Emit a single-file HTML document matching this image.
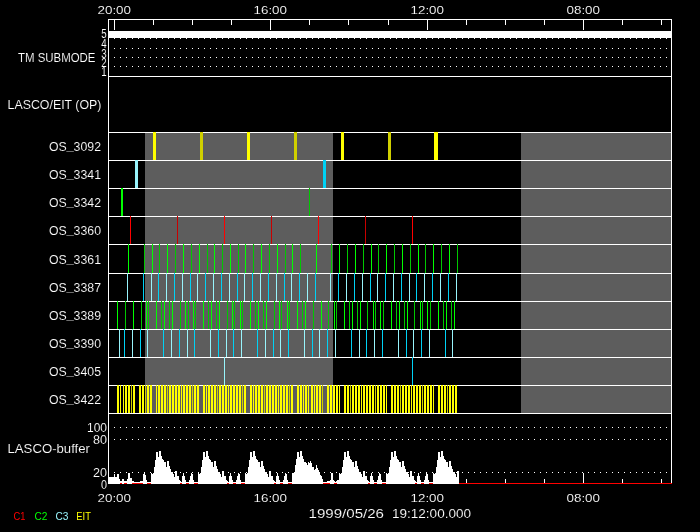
<!DOCTYPE html>
<html><head><meta charset="utf-8"><title>LASCO/EIT schedule</title>
<style>
html,body{margin:0;padding:0;background:#000;}
svg{display:block;will-change:transform}
text{font-family:"Liberation Sans",sans-serif;stroke:#000;stroke-width:0.12px;}
</style></head>
<body>
<svg width="700" height="532" viewBox="0 0 700 532">
<rect x="0" y="0" width="700" height="532" fill="#000"/>
<g shape-rendering="crispEdges">
<rect x="145" y="132" width="188" height="281" fill="#5d5d5d"/>
<rect x="521" y="132" width="150" height="281" fill="#5d5d5d"/>
<rect x="108" y="19" width="1" height="465" fill="#fff"/>
<rect x="671" y="19" width="1" height="465" fill="#fff"/>
<rect x="108" y="19" width="564" height="1" fill="#fff"/>
<rect x="108" y="76" width="564" height="1" fill="#fff"/>
<rect x="108" y="132" width="564" height="1" fill="#fff"/>
<rect x="108" y="160" width="564" height="1" fill="#fff"/>
<rect x="108" y="188" width="564" height="1" fill="#fff"/>
<rect x="108" y="216" width="564" height="1" fill="#fff"/>
<rect x="108" y="244" width="564" height="1" fill="#fff"/>
<rect x="108" y="273" width="564" height="1" fill="#fff"/>
<rect x="108" y="301" width="564" height="1" fill="#fff"/>
<rect x="108" y="329" width="564" height="1" fill="#fff"/>
<rect x="108" y="357" width="564" height="1" fill="#fff"/>
<rect x="108" y="385" width="564" height="1" fill="#fff"/>
<rect x="108" y="413" width="564" height="1" fill="#fff"/>
<rect x="114" y="19" width="1" height="11" fill="#fff"/>
<rect x="153" y="19" width="1" height="6" fill="#fff"/>
<rect x="192" y="19" width="1" height="6" fill="#fff"/>
<rect x="231" y="19" width="1" height="6" fill="#fff"/>
<rect x="270" y="19" width="1" height="11" fill="#fff"/>
<rect x="309" y="19" width="1" height="6" fill="#fff"/>
<rect x="348" y="19" width="1" height="6" fill="#fff"/>
<rect x="388" y="19" width="1" height="6" fill="#fff"/>
<rect x="427" y="19" width="1" height="11" fill="#fff"/>
<rect x="466" y="19" width="1" height="6" fill="#fff"/>
<rect x="505" y="19" width="1" height="6" fill="#fff"/>
<rect x="544" y="19" width="1" height="6" fill="#fff"/>
<rect x="583" y="19" width="1" height="11" fill="#fff"/>
<rect x="622" y="19" width="1" height="6" fill="#fff"/>
<rect x="661" y="19" width="1" height="6" fill="#fff"/>
<rect x="109" y="31" width="562" height="7" fill="#fff"/>
<path d="M114 38h1v1h-1zM120 38h1v1h-1zM126 38h1v1h-1zM132 38h1v1h-1zM138 38h1v1h-1zM144 38h1v1h-1zM150 38h1v1h-1zM156 38h1v1h-1zM162 38h1v1h-1zM168 38h1v1h-1zM174 38h1v1h-1zM180 38h1v1h-1zM186 38h1v1h-1zM192 38h1v1h-1zM198 38h1v1h-1zM204 38h1v1h-1zM210 38h1v1h-1zM216 38h1v1h-1zM222 38h1v1h-1zM228 38h1v1h-1zM234 38h1v1h-1zM240 38h1v1h-1zM246 38h1v1h-1zM252 38h1v1h-1zM258 38h1v1h-1zM264 38h1v1h-1zM270 38h1v1h-1zM276 38h1v1h-1zM282 38h1v1h-1zM288 38h1v1h-1zM294 38h1v1h-1zM300 38h1v1h-1zM306 38h1v1h-1zM312 38h1v1h-1zM318 38h1v1h-1zM324 38h1v1h-1zM330 38h1v1h-1zM336 38h1v1h-1zM342 38h1v1h-1zM348 38h1v1h-1zM354 38h1v1h-1zM360 38h1v1h-1zM366 38h1v1h-1zM372 38h1v1h-1zM378 38h1v1h-1zM384 38h1v1h-1zM390 38h1v1h-1zM396 38h1v1h-1zM402 38h1v1h-1zM408 38h1v1h-1zM414 38h1v1h-1zM420 38h1v1h-1zM426 38h1v1h-1zM432 38h1v1h-1zM438 38h1v1h-1zM444 38h1v1h-1zM450 38h1v1h-1zM456 38h1v1h-1zM462 38h1v1h-1zM468 38h1v1h-1zM474 38h1v1h-1zM480 38h1v1h-1zM486 38h1v1h-1zM492 38h1v1h-1zM498 38h1v1h-1zM504 38h1v1h-1zM510 38h1v1h-1zM516 38h1v1h-1zM522 38h1v1h-1zM528 38h1v1h-1zM534 38h1v1h-1zM540 38h1v1h-1zM546 38h1v1h-1zM552 38h1v1h-1zM558 38h1v1h-1zM564 38h1v1h-1zM570 38h1v1h-1zM576 38h1v1h-1zM582 38h1v1h-1zM588 38h1v1h-1zM594 38h1v1h-1zM600 38h1v1h-1zM606 38h1v1h-1zM612 38h1v1h-1zM618 38h1v1h-1zM624 38h1v1h-1zM630 38h1v1h-1zM636 38h1v1h-1zM642 38h1v1h-1zM648 38h1v1h-1zM654 38h1v1h-1zM660 38h1v1h-1zM666 38h1v1h-1zM114 48h1v1h-1zM120 48h1v1h-1zM126 48h1v1h-1zM132 48h1v1h-1zM138 48h1v1h-1zM144 48h1v1h-1zM150 48h1v1h-1zM156 48h1v1h-1zM162 48h1v1h-1zM168 48h1v1h-1zM174 48h1v1h-1zM180 48h1v1h-1zM186 48h1v1h-1zM192 48h1v1h-1zM198 48h1v1h-1zM204 48h1v1h-1zM210 48h1v1h-1zM216 48h1v1h-1zM222 48h1v1h-1zM228 48h1v1h-1zM234 48h1v1h-1zM240 48h1v1h-1zM246 48h1v1h-1zM252 48h1v1h-1zM258 48h1v1h-1zM264 48h1v1h-1zM270 48h1v1h-1zM276 48h1v1h-1zM282 48h1v1h-1zM288 48h1v1h-1zM294 48h1v1h-1zM300 48h1v1h-1zM306 48h1v1h-1zM312 48h1v1h-1zM318 48h1v1h-1zM324 48h1v1h-1zM330 48h1v1h-1zM336 48h1v1h-1zM342 48h1v1h-1zM348 48h1v1h-1zM354 48h1v1h-1zM360 48h1v1h-1zM366 48h1v1h-1zM372 48h1v1h-1zM378 48h1v1h-1zM384 48h1v1h-1zM390 48h1v1h-1zM396 48h1v1h-1zM402 48h1v1h-1zM408 48h1v1h-1zM414 48h1v1h-1zM420 48h1v1h-1zM426 48h1v1h-1zM432 48h1v1h-1zM438 48h1v1h-1zM444 48h1v1h-1zM450 48h1v1h-1zM456 48h1v1h-1zM462 48h1v1h-1zM468 48h1v1h-1zM474 48h1v1h-1zM480 48h1v1h-1zM486 48h1v1h-1zM492 48h1v1h-1zM498 48h1v1h-1zM504 48h1v1h-1zM510 48h1v1h-1zM516 48h1v1h-1zM522 48h1v1h-1zM528 48h1v1h-1zM534 48h1v1h-1zM540 48h1v1h-1zM546 48h1v1h-1zM552 48h1v1h-1zM558 48h1v1h-1zM564 48h1v1h-1zM570 48h1v1h-1zM576 48h1v1h-1zM582 48h1v1h-1zM588 48h1v1h-1zM594 48h1v1h-1zM600 48h1v1h-1zM606 48h1v1h-1zM612 48h1v1h-1zM618 48h1v1h-1zM624 48h1v1h-1zM630 48h1v1h-1zM636 48h1v1h-1zM642 48h1v1h-1zM648 48h1v1h-1zM654 48h1v1h-1zM660 48h1v1h-1zM666 48h1v1h-1zM114 57h1v1h-1zM120 57h1v1h-1zM126 57h1v1h-1zM132 57h1v1h-1zM138 57h1v1h-1zM144 57h1v1h-1zM150 57h1v1h-1zM156 57h1v1h-1zM162 57h1v1h-1zM168 57h1v1h-1zM174 57h1v1h-1zM180 57h1v1h-1zM186 57h1v1h-1zM192 57h1v1h-1zM198 57h1v1h-1zM204 57h1v1h-1zM210 57h1v1h-1zM216 57h1v1h-1zM222 57h1v1h-1zM228 57h1v1h-1zM234 57h1v1h-1zM240 57h1v1h-1zM246 57h1v1h-1zM252 57h1v1h-1zM258 57h1v1h-1zM264 57h1v1h-1zM270 57h1v1h-1zM276 57h1v1h-1zM282 57h1v1h-1zM288 57h1v1h-1zM294 57h1v1h-1zM300 57h1v1h-1zM306 57h1v1h-1zM312 57h1v1h-1zM318 57h1v1h-1zM324 57h1v1h-1zM330 57h1v1h-1zM336 57h1v1h-1zM342 57h1v1h-1zM348 57h1v1h-1zM354 57h1v1h-1zM360 57h1v1h-1zM366 57h1v1h-1zM372 57h1v1h-1zM378 57h1v1h-1zM384 57h1v1h-1zM390 57h1v1h-1zM396 57h1v1h-1zM402 57h1v1h-1zM408 57h1v1h-1zM414 57h1v1h-1zM420 57h1v1h-1zM426 57h1v1h-1zM432 57h1v1h-1zM438 57h1v1h-1zM444 57h1v1h-1zM450 57h1v1h-1zM456 57h1v1h-1zM462 57h1v1h-1zM468 57h1v1h-1zM474 57h1v1h-1zM480 57h1v1h-1zM486 57h1v1h-1zM492 57h1v1h-1zM498 57h1v1h-1zM504 57h1v1h-1zM510 57h1v1h-1zM516 57h1v1h-1zM522 57h1v1h-1zM528 57h1v1h-1zM534 57h1v1h-1zM540 57h1v1h-1zM546 57h1v1h-1zM552 57h1v1h-1zM558 57h1v1h-1zM564 57h1v1h-1zM570 57h1v1h-1zM576 57h1v1h-1zM582 57h1v1h-1zM588 57h1v1h-1zM594 57h1v1h-1zM600 57h1v1h-1zM606 57h1v1h-1zM612 57h1v1h-1zM618 57h1v1h-1zM624 57h1v1h-1zM630 57h1v1h-1zM636 57h1v1h-1zM642 57h1v1h-1zM648 57h1v1h-1zM654 57h1v1h-1zM660 57h1v1h-1zM666 57h1v1h-1zM114 66h1v1h-1zM120 66h1v1h-1zM126 66h1v1h-1zM132 66h1v1h-1zM138 66h1v1h-1zM144 66h1v1h-1zM150 66h1v1h-1zM156 66h1v1h-1zM162 66h1v1h-1zM168 66h1v1h-1zM174 66h1v1h-1zM180 66h1v1h-1zM186 66h1v1h-1zM192 66h1v1h-1zM198 66h1v1h-1zM204 66h1v1h-1zM210 66h1v1h-1zM216 66h1v1h-1zM222 66h1v1h-1zM228 66h1v1h-1zM234 66h1v1h-1zM240 66h1v1h-1zM246 66h1v1h-1zM252 66h1v1h-1zM258 66h1v1h-1zM264 66h1v1h-1zM270 66h1v1h-1zM276 66h1v1h-1zM282 66h1v1h-1zM288 66h1v1h-1zM294 66h1v1h-1zM300 66h1v1h-1zM306 66h1v1h-1zM312 66h1v1h-1zM318 66h1v1h-1zM324 66h1v1h-1zM330 66h1v1h-1zM336 66h1v1h-1zM342 66h1v1h-1zM348 66h1v1h-1zM354 66h1v1h-1zM360 66h1v1h-1zM366 66h1v1h-1zM372 66h1v1h-1zM378 66h1v1h-1zM384 66h1v1h-1zM390 66h1v1h-1zM396 66h1v1h-1zM402 66h1v1h-1zM408 66h1v1h-1zM414 66h1v1h-1zM420 66h1v1h-1zM426 66h1v1h-1zM432 66h1v1h-1zM438 66h1v1h-1zM444 66h1v1h-1zM450 66h1v1h-1zM456 66h1v1h-1zM462 66h1v1h-1zM468 66h1v1h-1zM474 66h1v1h-1zM480 66h1v1h-1zM486 66h1v1h-1zM492 66h1v1h-1zM498 66h1v1h-1zM504 66h1v1h-1zM510 66h1v1h-1zM516 66h1v1h-1zM522 66h1v1h-1zM528 66h1v1h-1zM534 66h1v1h-1zM540 66h1v1h-1zM546 66h1v1h-1zM552 66h1v1h-1zM558 66h1v1h-1zM564 66h1v1h-1zM570 66h1v1h-1zM576 66h1v1h-1zM582 66h1v1h-1zM588 66h1v1h-1zM594 66h1v1h-1zM600 66h1v1h-1zM606 66h1v1h-1zM612 66h1v1h-1zM618 66h1v1h-1zM624 66h1v1h-1zM630 66h1v1h-1zM636 66h1v1h-1zM642 66h1v1h-1zM648 66h1v1h-1zM654 66h1v1h-1zM660 66h1v1h-1zM666 66h1v1h-1zM114 427h1v1h-1zM120 427h1v1h-1zM126 427h1v1h-1zM132 427h1v1h-1zM138 427h1v1h-1zM144 427h1v1h-1zM150 427h1v1h-1zM156 427h1v1h-1zM162 427h1v1h-1zM168 427h1v1h-1zM174 427h1v1h-1zM180 427h1v1h-1zM186 427h1v1h-1zM192 427h1v1h-1zM198 427h1v1h-1zM204 427h1v1h-1zM210 427h1v1h-1zM216 427h1v1h-1zM222 427h1v1h-1zM228 427h1v1h-1zM234 427h1v1h-1zM240 427h1v1h-1zM246 427h1v1h-1zM252 427h1v1h-1zM258 427h1v1h-1zM264 427h1v1h-1zM270 427h1v1h-1zM276 427h1v1h-1zM282 427h1v1h-1zM288 427h1v1h-1zM294 427h1v1h-1zM300 427h1v1h-1zM306 427h1v1h-1zM312 427h1v1h-1zM318 427h1v1h-1zM324 427h1v1h-1zM330 427h1v1h-1zM336 427h1v1h-1zM342 427h1v1h-1zM348 427h1v1h-1zM354 427h1v1h-1zM360 427h1v1h-1zM366 427h1v1h-1zM372 427h1v1h-1zM378 427h1v1h-1zM384 427h1v1h-1zM390 427h1v1h-1zM396 427h1v1h-1zM402 427h1v1h-1zM408 427h1v1h-1zM414 427h1v1h-1zM420 427h1v1h-1zM426 427h1v1h-1zM432 427h1v1h-1zM438 427h1v1h-1zM444 427h1v1h-1zM450 427h1v1h-1zM456 427h1v1h-1zM462 427h1v1h-1zM468 427h1v1h-1zM474 427h1v1h-1zM480 427h1v1h-1zM486 427h1v1h-1zM492 427h1v1h-1zM498 427h1v1h-1zM504 427h1v1h-1zM510 427h1v1h-1zM516 427h1v1h-1zM522 427h1v1h-1zM528 427h1v1h-1zM534 427h1v1h-1zM540 427h1v1h-1zM546 427h1v1h-1zM552 427h1v1h-1zM558 427h1v1h-1zM564 427h1v1h-1zM570 427h1v1h-1zM576 427h1v1h-1zM582 427h1v1h-1zM588 427h1v1h-1zM594 427h1v1h-1zM600 427h1v1h-1zM606 427h1v1h-1zM612 427h1v1h-1zM618 427h1v1h-1zM624 427h1v1h-1zM630 427h1v1h-1zM636 427h1v1h-1zM642 427h1v1h-1zM648 427h1v1h-1zM654 427h1v1h-1zM660 427h1v1h-1zM666 427h1v1h-1zM114 439h1v1h-1zM120 439h1v1h-1zM126 439h1v1h-1zM132 439h1v1h-1zM138 439h1v1h-1zM144 439h1v1h-1zM150 439h1v1h-1zM156 439h1v1h-1zM162 439h1v1h-1zM168 439h1v1h-1zM174 439h1v1h-1zM180 439h1v1h-1zM186 439h1v1h-1zM192 439h1v1h-1zM198 439h1v1h-1zM204 439h1v1h-1zM210 439h1v1h-1zM216 439h1v1h-1zM222 439h1v1h-1zM228 439h1v1h-1zM234 439h1v1h-1zM240 439h1v1h-1zM246 439h1v1h-1zM252 439h1v1h-1zM258 439h1v1h-1zM264 439h1v1h-1zM270 439h1v1h-1zM276 439h1v1h-1zM282 439h1v1h-1zM288 439h1v1h-1zM294 439h1v1h-1zM300 439h1v1h-1zM306 439h1v1h-1zM312 439h1v1h-1zM318 439h1v1h-1zM324 439h1v1h-1zM330 439h1v1h-1zM336 439h1v1h-1zM342 439h1v1h-1zM348 439h1v1h-1zM354 439h1v1h-1zM360 439h1v1h-1zM366 439h1v1h-1zM372 439h1v1h-1zM378 439h1v1h-1zM384 439h1v1h-1zM390 439h1v1h-1zM396 439h1v1h-1zM402 439h1v1h-1zM408 439h1v1h-1zM414 439h1v1h-1zM420 439h1v1h-1zM426 439h1v1h-1zM432 439h1v1h-1zM438 439h1v1h-1zM444 439h1v1h-1zM450 439h1v1h-1zM456 439h1v1h-1zM462 439h1v1h-1zM468 439h1v1h-1zM474 439h1v1h-1zM480 439h1v1h-1zM486 439h1v1h-1zM492 439h1v1h-1zM498 439h1v1h-1zM504 439h1v1h-1zM510 439h1v1h-1zM516 439h1v1h-1zM522 439h1v1h-1zM528 439h1v1h-1zM534 439h1v1h-1zM540 439h1v1h-1zM546 439h1v1h-1zM552 439h1v1h-1zM558 439h1v1h-1zM564 439h1v1h-1zM570 439h1v1h-1zM576 439h1v1h-1zM582 439h1v1h-1zM588 439h1v1h-1zM594 439h1v1h-1zM600 439h1v1h-1zM606 439h1v1h-1zM612 439h1v1h-1zM618 439h1v1h-1zM624 439h1v1h-1zM630 439h1v1h-1zM636 439h1v1h-1zM642 439h1v1h-1zM648 439h1v1h-1zM654 439h1v1h-1zM660 439h1v1h-1zM666 439h1v1h-1zM114 472h1v1h-1zM120 472h1v1h-1zM126 472h1v1h-1zM132 472h1v1h-1zM138 472h1v1h-1zM144 472h1v1h-1zM150 472h1v1h-1zM156 472h1v1h-1zM162 472h1v1h-1zM168 472h1v1h-1zM174 472h1v1h-1zM180 472h1v1h-1zM186 472h1v1h-1zM192 472h1v1h-1zM198 472h1v1h-1zM204 472h1v1h-1zM210 472h1v1h-1zM216 472h1v1h-1zM222 472h1v1h-1zM228 472h1v1h-1zM234 472h1v1h-1zM240 472h1v1h-1zM246 472h1v1h-1zM252 472h1v1h-1zM258 472h1v1h-1zM264 472h1v1h-1zM270 472h1v1h-1zM276 472h1v1h-1zM282 472h1v1h-1zM288 472h1v1h-1zM294 472h1v1h-1zM300 472h1v1h-1zM306 472h1v1h-1zM312 472h1v1h-1zM318 472h1v1h-1zM324 472h1v1h-1zM330 472h1v1h-1zM336 472h1v1h-1zM342 472h1v1h-1zM348 472h1v1h-1zM354 472h1v1h-1zM360 472h1v1h-1zM366 472h1v1h-1zM372 472h1v1h-1zM378 472h1v1h-1zM384 472h1v1h-1zM390 472h1v1h-1zM396 472h1v1h-1zM402 472h1v1h-1zM408 472h1v1h-1zM414 472h1v1h-1zM420 472h1v1h-1zM426 472h1v1h-1zM432 472h1v1h-1zM438 472h1v1h-1zM444 472h1v1h-1zM450 472h1v1h-1zM456 472h1v1h-1zM462 472h1v1h-1zM468 472h1v1h-1zM474 472h1v1h-1zM480 472h1v1h-1zM486 472h1v1h-1zM492 472h1v1h-1zM498 472h1v1h-1zM504 472h1v1h-1zM510 472h1v1h-1zM516 472h1v1h-1zM522 472h1v1h-1zM528 472h1v1h-1zM534 472h1v1h-1zM540 472h1v1h-1zM546 472h1v1h-1zM552 472h1v1h-1zM558 472h1v1h-1zM564 472h1v1h-1zM570 472h1v1h-1zM576 472h1v1h-1zM582 472h1v1h-1zM588 472h1v1h-1zM594 472h1v1h-1zM600 472h1v1h-1zM606 472h1v1h-1zM612 472h1v1h-1zM618 472h1v1h-1zM624 472h1v1h-1zM630 472h1v1h-1zM636 472h1v1h-1zM642 472h1v1h-1zM648 472h1v1h-1zM654 472h1v1h-1zM660 472h1v1h-1zM666 472h1v1h-1z" fill="#fff"/>
<rect x="153" y="132" width="3" height="28" fill="#ffff00"/>
<rect x="200" y="132" width="3" height="28" fill="#d0d000"/>
<rect x="247" y="132" width="3" height="28" fill="#ffff00"/>
<rect x="294" y="132" width="3" height="28" fill="#d0d000"/>
<rect x="341" y="132" width="3" height="28" fill="#ffff00"/>
<rect x="388" y="132" width="3" height="28" fill="#d0d000"/>
<rect x="434" y="132" width="4" height="28" fill="#ffff00"/>
<rect x="135" y="160" width="3" height="28" fill="#98f4fc"/>
<rect x="323" y="160" width="3" height="28" fill="#00d2f5"/>
<rect x="121" y="188" width="2" height="28" fill="#00ff00"/>
<rect x="309" y="188" width="1" height="28" fill="#00c800"/>
<rect x="130" y="216" width="1" height="28" fill="#ff0000"/>
<rect x="177" y="216" width="1" height="28" fill="#c80000"/>
<rect x="224" y="216" width="1" height="28" fill="#ff0000"/>
<rect x="271" y="216" width="1" height="28" fill="#c80000"/>
<rect x="318" y="216" width="1" height="28" fill="#ff0000"/>
<rect x="365" y="216" width="1" height="28" fill="#c80000"/>
<rect x="412" y="216" width="1" height="28" fill="#ff0000"/>
<rect x="128" y="244" width="1" height="29" fill="#00ff00"/>
<rect x="144" y="244" width="1" height="29" fill="#00c800"/>
<rect x="152" y="244" width="1" height="29" fill="#00ff00"/>
<rect x="159" y="244" width="1" height="29" fill="#00c800"/>
<rect x="167" y="244" width="1" height="29" fill="#00ff00"/>
<rect x="175" y="244" width="1" height="29" fill="#00c800"/>
<rect x="183" y="244" width="1" height="29" fill="#00ff00"/>
<rect x="191" y="244" width="1" height="29" fill="#00c800"/>
<rect x="199" y="244" width="1" height="29" fill="#00ff00"/>
<rect x="207" y="244" width="1" height="29" fill="#00c800"/>
<rect x="214" y="244" width="1" height="29" fill="#00ff00"/>
<rect x="222" y="244" width="1" height="29" fill="#00c800"/>
<rect x="230" y="244" width="1" height="29" fill="#00ff00"/>
<rect x="238" y="244" width="1" height="29" fill="#00c800"/>
<rect x="245" y="244" width="1" height="29" fill="#00ff00"/>
<rect x="253" y="244" width="1" height="29" fill="#00c800"/>
<rect x="261" y="244" width="1" height="29" fill="#00ff00"/>
<rect x="269" y="244" width="1" height="29" fill="#00c800"/>
<rect x="277" y="244" width="1" height="29" fill="#00ff00"/>
<rect x="285" y="244" width="1" height="29" fill="#00c800"/>
<rect x="292" y="244" width="1" height="29" fill="#00ff00"/>
<rect x="300" y="244" width="1" height="29" fill="#00c800"/>
<rect x="316" y="244" width="1" height="29" fill="#00ff00"/>
<rect x="331" y="244" width="1" height="29" fill="#00c800"/>
<rect x="339" y="244" width="1" height="29" fill="#00ff00"/>
<rect x="347" y="244" width="1" height="29" fill="#00c800"/>
<rect x="355" y="244" width="1" height="29" fill="#00ff00"/>
<rect x="363" y="244" width="1" height="29" fill="#00c800"/>
<rect x="371" y="244" width="1" height="29" fill="#00ff00"/>
<rect x="378" y="244" width="1" height="29" fill="#00c800"/>
<rect x="386" y="244" width="1" height="29" fill="#00ff00"/>
<rect x="394" y="244" width="1" height="29" fill="#00c800"/>
<rect x="402" y="244" width="1" height="29" fill="#00ff00"/>
<rect x="410" y="244" width="1" height="29" fill="#00c800"/>
<rect x="418" y="244" width="1" height="29" fill="#00ff00"/>
<rect x="425" y="244" width="1" height="29" fill="#00c800"/>
<rect x="433" y="244" width="1" height="29" fill="#00ff00"/>
<rect x="441" y="244" width="1" height="29" fill="#00c800"/>
<rect x="449" y="244" width="1" height="29" fill="#00ff00"/>
<rect x="457" y="244" width="1" height="29" fill="#00c800"/>
<rect x="127" y="273" width="1" height="28" fill="#98f4fc"/>
<rect x="143" y="273" width="1" height="28" fill="#00d2f5"/>
<rect x="151" y="273" width="1" height="28" fill="#98f4fc"/>
<rect x="158" y="273" width="1" height="28" fill="#00d2f5"/>
<rect x="166" y="273" width="1" height="28" fill="#98f4fc"/>
<rect x="174" y="273" width="1" height="28" fill="#00d2f5"/>
<rect x="182" y="273" width="1" height="28" fill="#98f4fc"/>
<rect x="190" y="273" width="1" height="28" fill="#00d2f5"/>
<rect x="197" y="273" width="1" height="28" fill="#98f4fc"/>
<rect x="205" y="273" width="1" height="28" fill="#00d2f5"/>
<rect x="213" y="273" width="1" height="28" fill="#98f4fc"/>
<rect x="221" y="273" width="1" height="28" fill="#00d2f5"/>
<rect x="229" y="273" width="1" height="28" fill="#98f4fc"/>
<rect x="237" y="273" width="1" height="28" fill="#00d2f5"/>
<rect x="244" y="273" width="1" height="28" fill="#98f4fc"/>
<rect x="252" y="273" width="1" height="28" fill="#00d2f5"/>
<rect x="260" y="273" width="1" height="28" fill="#98f4fc"/>
<rect x="268" y="273" width="1" height="28" fill="#00d2f5"/>
<rect x="276" y="273" width="1" height="28" fill="#98f4fc"/>
<rect x="284" y="273" width="1" height="28" fill="#00d2f5"/>
<rect x="291" y="273" width="1" height="28" fill="#98f4fc"/>
<rect x="299" y="273" width="1" height="28" fill="#00d2f5"/>
<rect x="307" y="273" width="1" height="28" fill="#98f4fc"/>
<rect x="315" y="273" width="1" height="28" fill="#00d2f5"/>
<rect x="330" y="273" width="1" height="28" fill="#98f4fc"/>
<rect x="338" y="273" width="1" height="28" fill="#00d2f5"/>
<rect x="346" y="273" width="1" height="28" fill="#98f4fc"/>
<rect x="354" y="273" width="1" height="28" fill="#00d2f5"/>
<rect x="362" y="273" width="1" height="28" fill="#98f4fc"/>
<rect x="370" y="273" width="1" height="28" fill="#00d2f5"/>
<rect x="377" y="273" width="1" height="28" fill="#98f4fc"/>
<rect x="385" y="273" width="1" height="28" fill="#00d2f5"/>
<rect x="393" y="273" width="1" height="28" fill="#98f4fc"/>
<rect x="401" y="273" width="1" height="28" fill="#00d2f5"/>
<rect x="409" y="273" width="1" height="28" fill="#98f4fc"/>
<rect x="416" y="273" width="1" height="28" fill="#00d2f5"/>
<rect x="424" y="273" width="1" height="28" fill="#98f4fc"/>
<rect x="432" y="273" width="1" height="28" fill="#00d2f5"/>
<rect x="440" y="273" width="1" height="28" fill="#98f4fc"/>
<rect x="448" y="273" width="1" height="28" fill="#00d2f5"/>
<rect x="456" y="273" width="1" height="28" fill="#98f4fc"/>
<rect x="117" y="301" width="1" height="28" fill="#00ff00"/>
<rect x="125" y="301" width="1" height="28" fill="#00c800"/>
<rect x="133" y="301" width="1" height="28" fill="#00ff00"/>
<rect x="141" y="301" width="1" height="28" fill="#00c800"/>
<rect x="146" y="301" width="1" height="28" fill="#00ff00"/>
<rect x="148" y="301" width="1" height="28" fill="#00c800"/>
<rect x="156" y="301" width="1" height="28" fill="#00ff00"/>
<rect x="161" y="301" width="1" height="28" fill="#00c800"/>
<rect x="164" y="301" width="1" height="28" fill="#00ff00"/>
<rect x="169" y="301" width="1" height="28" fill="#00c800"/>
<rect x="172" y="301" width="1" height="28" fill="#00ff00"/>
<rect x="180" y="301" width="1" height="28" fill="#00c800"/>
<rect x="185" y="301" width="1" height="28" fill="#00ff00"/>
<rect x="188" y="301" width="1" height="28" fill="#00c800"/>
<rect x="193" y="301" width="1" height="28" fill="#00ff00"/>
<rect x="195" y="301" width="1" height="28" fill="#00c800"/>
<rect x="203" y="301" width="1" height="28" fill="#00ff00"/>
<rect x="208" y="301" width="1" height="28" fill="#00c800"/>
<rect x="211" y="301" width="1" height="28" fill="#00ff00"/>
<rect x="216" y="301" width="1" height="28" fill="#00c800"/>
<rect x="219" y="301" width="1" height="28" fill="#00ff00"/>
<rect x="227" y="301" width="1" height="28" fill="#00c800"/>
<rect x="232" y="301" width="1" height="28" fill="#00ff00"/>
<rect x="234" y="301" width="1" height="28" fill="#00c800"/>
<rect x="240" y="301" width="1" height="28" fill="#00ff00"/>
<rect x="242" y="301" width="1" height="28" fill="#00c800"/>
<rect x="250" y="301" width="1" height="28" fill="#00ff00"/>
<rect x="255" y="301" width="1" height="28" fill="#00c800"/>
<rect x="258" y="301" width="1" height="28" fill="#00ff00"/>
<rect x="263" y="301" width="1" height="28" fill="#00c800"/>
<rect x="266" y="301" width="1" height="28" fill="#00ff00"/>
<rect x="274" y="301" width="1" height="28" fill="#00c800"/>
<rect x="279" y="301" width="1" height="28" fill="#00ff00"/>
<rect x="281" y="301" width="1" height="28" fill="#00c800"/>
<rect x="287" y="301" width="1" height="28" fill="#00ff00"/>
<rect x="289" y="301" width="1" height="28" fill="#00c800"/>
<rect x="297" y="301" width="1" height="28" fill="#00ff00"/>
<rect x="302" y="301" width="1" height="28" fill="#00c800"/>
<rect x="305" y="301" width="1" height="28" fill="#00ff00"/>
<rect x="313" y="301" width="1" height="28" fill="#00c800"/>
<rect x="321" y="301" width="1" height="28" fill="#00ff00"/>
<rect x="328" y="301" width="1" height="28" fill="#00c800"/>
<rect x="334" y="301" width="1" height="28" fill="#00ff00"/>
<rect x="336" y="301" width="1" height="28" fill="#00c800"/>
<rect x="344" y="301" width="1" height="28" fill="#00ff00"/>
<rect x="349" y="301" width="1" height="28" fill="#00c800"/>
<rect x="352" y="301" width="1" height="28" fill="#00ff00"/>
<rect x="357" y="301" width="1" height="28" fill="#00c800"/>
<rect x="360" y="301" width="1" height="28" fill="#00ff00"/>
<rect x="367" y="301" width="1" height="28" fill="#00c800"/>
<rect x="373" y="301" width="1" height="28" fill="#00ff00"/>
<rect x="375" y="301" width="1" height="28" fill="#00c800"/>
<rect x="380" y="301" width="1" height="28" fill="#00ff00"/>
<rect x="383" y="301" width="1" height="28" fill="#00c800"/>
<rect x="391" y="301" width="1" height="28" fill="#00ff00"/>
<rect x="396" y="301" width="1" height="28" fill="#00c800"/>
<rect x="399" y="301" width="1" height="28" fill="#00ff00"/>
<rect x="404" y="301" width="1" height="28" fill="#00c800"/>
<rect x="407" y="301" width="1" height="28" fill="#00ff00"/>
<rect x="414" y="301" width="1" height="28" fill="#00c800"/>
<rect x="420" y="301" width="1" height="28" fill="#00ff00"/>
<rect x="422" y="301" width="1" height="28" fill="#00c800"/>
<rect x="427" y="301" width="1" height="28" fill="#00ff00"/>
<rect x="430" y="301" width="1" height="28" fill="#00c800"/>
<rect x="438" y="301" width="1" height="28" fill="#00ff00"/>
<rect x="443" y="301" width="1" height="28" fill="#00c800"/>
<rect x="446" y="301" width="1" height="28" fill="#00ff00"/>
<rect x="451" y="301" width="1" height="28" fill="#00c800"/>
<rect x="454" y="301" width="1" height="28" fill="#00ff00"/>
<rect x="119" y="329" width="1" height="28" fill="#98f4fc"/>
<rect x="124" y="329" width="1" height="28" fill="#00d2f5"/>
<rect x="132" y="329" width="1" height="28" fill="#98f4fc"/>
<rect x="140" y="329" width="1" height="28" fill="#00d2f5"/>
<rect x="147" y="329" width="1" height="28" fill="#98f4fc"/>
<rect x="163" y="329" width="1" height="28" fill="#00d2f5"/>
<rect x="171" y="329" width="1" height="28" fill="#98f4fc"/>
<rect x="179" y="329" width="1" height="28" fill="#00d2f5"/>
<rect x="187" y="329" width="1" height="28" fill="#98f4fc"/>
<rect x="194" y="329" width="1" height="28" fill="#00d2f5"/>
<rect x="210" y="329" width="1" height="28" fill="#98f4fc"/>
<rect x="218" y="329" width="1" height="28" fill="#00d2f5"/>
<rect x="226" y="329" width="1" height="28" fill="#98f4fc"/>
<rect x="233" y="329" width="1" height="28" fill="#00d2f5"/>
<rect x="241" y="329" width="1" height="28" fill="#98f4fc"/>
<rect x="257" y="329" width="1" height="28" fill="#00d2f5"/>
<rect x="265" y="329" width="1" height="28" fill="#98f4fc"/>
<rect x="273" y="329" width="1" height="28" fill="#00d2f5"/>
<rect x="280" y="329" width="1" height="28" fill="#98f4fc"/>
<rect x="288" y="329" width="1" height="28" fill="#00d2f5"/>
<rect x="304" y="329" width="1" height="28" fill="#98f4fc"/>
<rect x="312" y="329" width="1" height="28" fill="#00d2f5"/>
<rect x="319" y="329" width="1" height="28" fill="#98f4fc"/>
<rect x="327" y="329" width="1" height="28" fill="#00d2f5"/>
<rect x="335" y="329" width="1" height="28" fill="#98f4fc"/>
<rect x="351" y="329" width="1" height="28" fill="#00d2f5"/>
<rect x="359" y="329" width="1" height="28" fill="#98f4fc"/>
<rect x="366" y="329" width="1" height="28" fill="#00d2f5"/>
<rect x="374" y="329" width="1" height="28" fill="#98f4fc"/>
<rect x="382" y="329" width="1" height="28" fill="#00d2f5"/>
<rect x="398" y="329" width="1" height="28" fill="#98f4fc"/>
<rect x="406" y="329" width="1" height="28" fill="#00d2f5"/>
<rect x="413" y="329" width="1" height="28" fill="#98f4fc"/>
<rect x="421" y="329" width="1" height="28" fill="#00d2f5"/>
<rect x="429" y="329" width="1" height="28" fill="#98f4fc"/>
<rect x="445" y="329" width="1" height="28" fill="#00d2f5"/>
<rect x="452" y="329" width="1" height="28" fill="#98f4fc"/>
<rect x="224" y="357" width="1" height="28" fill="#98f4fc"/>
<rect x="412" y="357" width="1" height="28" fill="#00d2f5"/>
<rect x="117" y="385" width="2" height="28" fill="#ffff00"/>
<rect x="120" y="385" width="1" height="28" fill="#ffff00"/>
<rect x="123" y="385" width="1" height="28" fill="#ffff00"/>
<rect x="125" y="385" width="2" height="28" fill="#ffff00"/>
<rect x="128" y="385" width="2" height="28" fill="#ffff00"/>
<rect x="131" y="385" width="1" height="28" fill="#d0d000"/>
<rect x="133" y="385" width="2" height="28" fill="#ffff00"/>
<rect x="139" y="385" width="2" height="28" fill="#ffff00"/>
<rect x="142" y="385" width="2" height="28" fill="#ffff00"/>
<rect x="145" y="385" width="1" height="28" fill="#d0d000"/>
<rect x="147" y="385" width="2" height="28" fill="#ffff00"/>
<rect x="150" y="385" width="2" height="28" fill="#ffff00"/>
<rect x="156" y="385" width="1" height="28" fill="#ffff00"/>
<rect x="158" y="385" width="2" height="28" fill="#ffff00"/>
<rect x="161" y="385" width="2" height="28" fill="#ffff00"/>
<rect x="164" y="385" width="2" height="28" fill="#ffff00"/>
<rect x="167" y="385" width="1" height="28" fill="#d0d000"/>
<rect x="169" y="385" width="2" height="28" fill="#ffff00"/>
<rect x="172" y="385" width="2" height="28" fill="#ffff00"/>
<rect x="175" y="385" width="2" height="28" fill="#ffff00"/>
<rect x="178" y="385" width="2" height="28" fill="#ffff00"/>
<rect x="181" y="385" width="1" height="28" fill="#ffff00"/>
<rect x="183" y="385" width="2" height="28" fill="#ffff00"/>
<rect x="186" y="385" width="2" height="28" fill="#ffff00"/>
<rect x="189" y="385" width="2" height="28" fill="#ffff00"/>
<rect x="192" y="385" width="1" height="28" fill="#d0d000"/>
<rect x="194" y="385" width="2" height="28" fill="#ffff00"/>
<rect x="197" y="385" width="2" height="28" fill="#ffff00"/>
<rect x="203" y="385" width="2" height="28" fill="#ffff00"/>
<rect x="206" y="385" width="1" height="28" fill="#ffff00"/>
<rect x="208" y="385" width="2" height="28" fill="#ffff00"/>
<rect x="211" y="385" width="2" height="28" fill="#ffff00"/>
<rect x="214" y="385" width="2" height="28" fill="#ffff00"/>
<rect x="217" y="385" width="1" height="28" fill="#d0d000"/>
<rect x="219" y="385" width="2" height="28" fill="#ffff00"/>
<rect x="222" y="385" width="2" height="28" fill="#ffff00"/>
<rect x="225" y="385" width="2" height="28" fill="#ffff00"/>
<rect x="228" y="385" width="1" height="28" fill="#ffff00"/>
<rect x="230" y="385" width="2" height="28" fill="#ffff00"/>
<rect x="233" y="385" width="2" height="28" fill="#ffff00"/>
<rect x="236" y="385" width="2" height="28" fill="#ffff00"/>
<rect x="239" y="385" width="2" height="28" fill="#ffff00"/>
<rect x="242" y="385" width="1" height="28" fill="#d0d000"/>
<rect x="244" y="385" width="2" height="28" fill="#ffff00"/>
<rect x="250" y="385" width="2" height="28" fill="#ffff00"/>
<rect x="253" y="385" width="1" height="28" fill="#ffff00"/>
<rect x="255" y="385" width="2" height="28" fill="#ffff00"/>
<rect x="258" y="385" width="2" height="28" fill="#ffff00"/>
<rect x="261" y="385" width="2" height="28" fill="#ffff00"/>
<rect x="264" y="385" width="1" height="28" fill="#d0d000"/>
<rect x="266" y="385" width="2" height="28" fill="#ffff00"/>
<rect x="269" y="385" width="2" height="28" fill="#ffff00"/>
<rect x="272" y="385" width="2" height="28" fill="#ffff00"/>
<rect x="275" y="385" width="2" height="28" fill="#ffff00"/>
<rect x="278" y="385" width="1" height="28" fill="#ffff00"/>
<rect x="280" y="385" width="2" height="28" fill="#ffff00"/>
<rect x="283" y="385" width="2" height="28" fill="#ffff00"/>
<rect x="286" y="385" width="2" height="28" fill="#ffff00"/>
<rect x="289" y="385" width="1" height="28" fill="#d0d000"/>
<rect x="291" y="385" width="2" height="28" fill="#ffff00"/>
<rect x="297" y="385" width="2" height="28" fill="#ffff00"/>
<rect x="300" y="385" width="2" height="28" fill="#ffff00"/>
<rect x="303" y="385" width="1" height="28" fill="#ffff00"/>
<rect x="305" y="385" width="2" height="28" fill="#ffff00"/>
<rect x="308" y="385" width="1" height="28" fill="#ffff00"/>
<rect x="311" y="385" width="2" height="28" fill="#ffff00"/>
<rect x="314" y="385" width="1" height="28" fill="#ffff00"/>
<rect x="316" y="385" width="2" height="28" fill="#ffff00"/>
<rect x="319" y="385" width="2" height="28" fill="#ffff00"/>
<rect x="322" y="385" width="1" height="28" fill="#d0d000"/>
<rect x="327" y="385" width="2" height="28" fill="#ffff00"/>
<rect x="330" y="385" width="2" height="28" fill="#ffff00"/>
<rect x="333" y="385" width="2" height="28" fill="#ffff00"/>
<rect x="336" y="385" width="2" height="28" fill="#ffff00"/>
<rect x="339" y="385" width="1" height="28" fill="#ffff00"/>
<rect x="344" y="385" width="2" height="28" fill="#ffff00"/>
<rect x="347" y="385" width="2" height="28" fill="#ffff00"/>
<rect x="350" y="385" width="1" height="28" fill="#d0d000"/>
<rect x="352" y="385" width="2" height="28" fill="#ffff00"/>
<rect x="355" y="385" width="2" height="28" fill="#ffff00"/>
<rect x="358" y="385" width="2" height="28" fill="#ffff00"/>
<rect x="361" y="385" width="1" height="28" fill="#ffff00"/>
<rect x="363" y="385" width="2" height="28" fill="#ffff00"/>
<rect x="366" y="385" width="2" height="28" fill="#ffff00"/>
<rect x="369" y="385" width="2" height="28" fill="#ffff00"/>
<rect x="372" y="385" width="2" height="28" fill="#ffff00"/>
<rect x="375" y="385" width="1" height="28" fill="#d0d000"/>
<rect x="377" y="385" width="2" height="28" fill="#ffff00"/>
<rect x="380" y="385" width="2" height="28" fill="#ffff00"/>
<rect x="383" y="385" width="2" height="28" fill="#ffff00"/>
<rect x="386" y="385" width="1" height="28" fill="#ffff00"/>
<rect x="391" y="385" width="2" height="28" fill="#ffff00"/>
<rect x="394" y="385" width="2" height="28" fill="#ffff00"/>
<rect x="397" y="385" width="2" height="28" fill="#ffff00"/>
<rect x="400" y="385" width="1" height="28" fill="#d0d000"/>
<rect x="402" y="385" width="2" height="28" fill="#ffff00"/>
<rect x="405" y="385" width="2" height="28" fill="#ffff00"/>
<rect x="408" y="385" width="2" height="28" fill="#ffff00"/>
<rect x="411" y="385" width="1" height="28" fill="#ffff00"/>
<rect x="413" y="385" width="2" height="28" fill="#ffff00"/>
<rect x="416" y="385" width="2" height="28" fill="#ffff00"/>
<rect x="419" y="385" width="2" height="28" fill="#ffff00"/>
<rect x="422" y="385" width="1" height="28" fill="#d0d000"/>
<rect x="424" y="385" width="2" height="28" fill="#ffff00"/>
<rect x="427" y="385" width="2" height="28" fill="#ffff00"/>
<rect x="430" y="385" width="2" height="28" fill="#ffff00"/>
<rect x="433" y="385" width="1" height="28" fill="#ffff00"/>
<rect x="438" y="385" width="2" height="28" fill="#ffff00"/>
<rect x="441" y="385" width="2" height="28" fill="#ffff00"/>
<rect x="444" y="385" width="2" height="28" fill="#ffff00"/>
<rect x="447" y="385" width="1" height="28" fill="#d0d000"/>
<rect x="449" y="385" width="2" height="28" fill="#ffff00"/>
<rect x="452" y="385" width="2" height="28" fill="#ffff00"/>
<rect x="455" y="385" width="2" height="28" fill="#ffff00"/>
<path d="M109 477h1v7h-1zM110 477h1v7h-1zM111 477h1v7h-1zM112 477h1v7h-1zM113 477h1v7h-1zM114 474h1v10h-1zM115 477h1v7h-1zM116 477h1v7h-1zM117 474h1v10h-1zM118 474h1v10h-1zM119 479h1v5h-1zM120 481h1v3h-1zM121 481h1v3h-1zM122 479h1v5h-1zM123 479h1v5h-1zM124 481h1v3h-1zM125 481h1v3h-1zM126 481h1v3h-1zM127 479h1v5h-1zM128 473h1v11h-1zM129 473h1v11h-1zM130 478h1v6h-1zM131 478h1v6h-1zM132 481h1v3h-1zM133 481h1v3h-1zM134 482h1v2h-1zM135 482h1v2h-1zM136 482h1v2h-1zM137 482h1v2h-1zM138 482h1v2h-1zM139 482h1v2h-1zM140 481h1v3h-1zM141 481h1v3h-1zM142 481h1v3h-1zM143 474h1v10h-1zM144 472h1v12h-1zM145 475h1v9h-1zM146 480h1v4h-1zM147 482h1v2h-1zM148 482h1v2h-1zM149 482h1v2h-1zM150 482h1v2h-1zM151 473h1v11h-1zM152 474h1v10h-1zM153 473h1v11h-1zM154 467h1v17h-1zM155 460h1v24h-1zM156 452h1v32h-1zM157 452h1v32h-1zM158 457h1v27h-1zM159 451h1v33h-1zM160 451h1v33h-1zM161 456h1v28h-1zM162 459h1v25h-1zM163 460h1v24h-1zM164 462h1v22h-1zM165 462h1v22h-1zM166 467h1v17h-1zM167 461h1v23h-1zM168 461h1v23h-1zM169 466h1v18h-1zM170 469h1v15h-1zM171 472h1v12h-1zM172 472h1v12h-1zM173 474h1v10h-1zM174 477h1v7h-1zM175 471h1v13h-1zM176 471h1v13h-1zM177 476h1v8h-1zM178 476h1v8h-1zM179 480h1v4h-1zM180 481h1v3h-1zM181 482h1v2h-1zM182 476h1v8h-1zM183 473h1v11h-1zM184 476h1v8h-1zM185 480h1v4h-1zM186 482h1v2h-1zM187 482h1v2h-1zM188 482h1v2h-1zM189 480h1v4h-1zM190 476h1v8h-1zM191 473h1v11h-1zM192 474h1v10h-1zM193 480h1v4h-1zM194 482h1v2h-1zM195 482h1v2h-1zM196 482h1v2h-1zM197 482h1v2h-1zM198 473h1v11h-1zM199 474h1v10h-1zM200 473h1v11h-1zM201 467h1v17h-1zM202 460h1v24h-1zM203 452h1v32h-1zM204 452h1v32h-1zM205 457h1v27h-1zM206 451h1v33h-1zM207 451h1v33h-1zM208 456h1v28h-1zM209 459h1v25h-1zM210 460h1v24h-1zM211 462h1v22h-1zM212 462h1v22h-1zM213 467h1v17h-1zM214 461h1v23h-1zM215 461h1v23h-1zM216 466h1v18h-1zM217 469h1v15h-1zM218 472h1v12h-1zM219 472h1v12h-1zM220 474h1v10h-1zM221 477h1v7h-1zM222 471h1v13h-1zM223 471h1v13h-1zM224 476h1v8h-1zM225 476h1v8h-1zM226 480h1v4h-1zM227 481h1v3h-1zM228 482h1v2h-1zM229 476h1v8h-1zM230 473h1v11h-1zM231 476h1v8h-1zM232 480h1v4h-1zM233 482h1v2h-1zM234 482h1v2h-1zM235 482h1v2h-1zM236 480h1v4h-1zM237 476h1v8h-1zM238 473h1v11h-1zM239 474h1v10h-1zM240 480h1v4h-1zM241 482h1v2h-1zM242 482h1v2h-1zM243 482h1v2h-1zM244 482h1v2h-1zM245 473h1v11h-1zM246 474h1v10h-1zM247 473h1v11h-1zM248 467h1v17h-1zM249 460h1v24h-1zM250 452h1v32h-1zM251 452h1v32h-1zM252 457h1v27h-1zM253 451h1v33h-1zM254 451h1v33h-1zM255 456h1v28h-1zM256 459h1v25h-1zM257 460h1v24h-1zM258 462h1v22h-1zM259 462h1v22h-1zM260 467h1v17h-1zM261 461h1v23h-1zM262 461h1v23h-1zM263 466h1v18h-1zM264 469h1v15h-1zM265 472h1v12h-1zM266 472h1v12h-1zM267 474h1v10h-1zM268 477h1v7h-1zM269 471h1v13h-1zM270 471h1v13h-1zM271 476h1v8h-1zM272 476h1v8h-1zM273 480h1v4h-1zM274 481h1v3h-1zM275 482h1v2h-1zM276 476h1v8h-1zM277 473h1v11h-1zM278 476h1v8h-1zM279 480h1v4h-1zM280 482h1v2h-1zM281 482h1v2h-1zM282 482h1v2h-1zM283 480h1v4h-1zM284 476h1v8h-1zM285 473h1v11h-1zM286 474h1v10h-1zM287 480h1v4h-1zM288 482h1v2h-1zM289 482h1v2h-1zM290 482h1v2h-1zM291 482h1v2h-1zM292 473h1v11h-1zM293 473h1v11h-1zM294 472h1v12h-1zM295 465h1v19h-1zM296 459h1v25h-1zM297 452h1v32h-1zM298 452h1v32h-1zM299 457h1v27h-1zM300 451h1v33h-1zM301 451h1v33h-1zM302 456h1v28h-1zM303 459h1v25h-1zM304 462h1v22h-1zM305 462h1v22h-1zM306 463h1v21h-1zM307 465h1v19h-1zM308 462h1v22h-1zM309 463h1v21h-1zM310 461h1v23h-1zM311 463h1v21h-1zM312 467h1v17h-1zM313 467h1v17h-1zM314 470h1v14h-1zM315 469h1v15h-1zM316 465h1v19h-1zM317 468h1v16h-1zM318 470h1v14h-1zM319 472h1v12h-1zM320 475h1v9h-1zM321 476h1v8h-1zM322 479h1v5h-1zM323 482h1v2h-1zM324 482h1v2h-1zM325 482h1v2h-1zM326 482h1v2h-1zM327 481h1v3h-1zM328 481h1v3h-1zM329 481h1v3h-1zM330 480h1v4h-1zM331 473h1v11h-1zM332 473h1v11h-1zM333 480h1v4h-1zM334 481h1v3h-1zM335 482h1v2h-1zM336 481h1v3h-1zM337 480h1v4h-1zM338 480h1v4h-1zM339 473h1v11h-1zM340 474h1v10h-1zM341 473h1v11h-1zM342 467h1v17h-1zM343 460h1v24h-1zM344 452h1v32h-1zM345 452h1v32h-1zM346 457h1v27h-1zM347 451h1v33h-1zM348 451h1v33h-1zM349 456h1v28h-1zM350 459h1v25h-1zM351 460h1v24h-1zM352 462h1v22h-1zM353 462h1v22h-1zM354 467h1v17h-1zM355 461h1v23h-1zM356 461h1v23h-1zM357 466h1v18h-1zM358 469h1v15h-1zM359 472h1v12h-1zM360 472h1v12h-1zM361 474h1v10h-1zM362 477h1v7h-1zM363 471h1v13h-1zM364 471h1v13h-1zM365 476h1v8h-1zM366 476h1v8h-1zM367 480h1v4h-1zM368 481h1v3h-1zM369 482h1v2h-1zM370 476h1v8h-1zM371 473h1v11h-1zM372 476h1v8h-1zM373 480h1v4h-1zM374 482h1v2h-1zM375 482h1v2h-1zM376 482h1v2h-1zM377 480h1v4h-1zM378 476h1v8h-1zM379 473h1v11h-1zM380 474h1v10h-1zM381 480h1v4h-1zM382 482h1v2h-1zM383 482h1v2h-1zM384 482h1v2h-1zM385 482h1v2h-1zM386 473h1v11h-1zM387 474h1v10h-1zM388 473h1v11h-1zM389 467h1v17h-1zM390 460h1v24h-1zM391 452h1v32h-1zM392 452h1v32h-1zM393 457h1v27h-1zM394 451h1v33h-1zM395 451h1v33h-1zM396 456h1v28h-1zM397 459h1v25h-1zM398 460h1v24h-1zM399 462h1v22h-1zM400 462h1v22h-1zM401 467h1v17h-1zM402 461h1v23h-1zM403 461h1v23h-1zM404 466h1v18h-1zM405 469h1v15h-1zM406 472h1v12h-1zM407 472h1v12h-1zM408 474h1v10h-1zM409 477h1v7h-1zM410 471h1v13h-1zM411 471h1v13h-1zM412 476h1v8h-1zM413 476h1v8h-1zM414 480h1v4h-1zM415 481h1v3h-1zM416 482h1v2h-1zM417 476h1v8h-1zM418 473h1v11h-1zM419 476h1v8h-1zM420 480h1v4h-1zM421 482h1v2h-1zM422 482h1v2h-1zM423 482h1v2h-1zM424 480h1v4h-1zM425 476h1v8h-1zM426 473h1v11h-1zM427 474h1v10h-1zM428 480h1v4h-1zM429 482h1v2h-1zM430 482h1v2h-1zM431 482h1v2h-1zM432 482h1v2h-1zM433 473h1v11h-1zM434 474h1v10h-1zM435 473h1v11h-1zM436 467h1v17h-1zM437 460h1v24h-1zM438 452h1v32h-1zM439 452h1v32h-1zM440 457h1v27h-1zM441 451h1v33h-1zM442 451h1v33h-1zM443 456h1v28h-1zM444 459h1v25h-1zM445 460h1v24h-1zM446 462h1v22h-1zM447 462h1v22h-1zM448 467h1v17h-1zM449 461h1v23h-1zM450 461h1v23h-1zM451 466h1v18h-1zM452 469h1v15h-1zM453 472h1v12h-1zM454 472h1v12h-1zM455 474h1v10h-1zM456 477h1v7h-1zM457 471h1v13h-1zM458 471h1v13h-1z" fill="#fff"/>
<path d="M120 483h1v1h-1zM121 483h1v1h-1zM124 483h1v1h-1zM125 483h1v1h-1zM126 483h1v1h-1zM132 483h1v1h-1zM133 483h1v1h-1zM134 483h1v1h-1zM135 483h1v1h-1zM136 483h1v1h-1zM137 483h1v1h-1zM138 483h1v1h-1zM139 483h1v1h-1zM140 483h1v1h-1zM141 483h1v1h-1zM142 483h1v1h-1zM147 483h1v1h-1zM148 483h1v1h-1zM149 483h1v1h-1zM150 483h1v1h-1zM180 483h1v1h-1zM181 483h1v1h-1zM186 483h1v1h-1zM187 483h1v1h-1zM188 483h1v1h-1zM194 483h1v1h-1zM195 483h1v1h-1zM196 483h1v1h-1zM197 483h1v1h-1zM227 483h1v1h-1zM228 483h1v1h-1zM233 483h1v1h-1zM234 483h1v1h-1zM235 483h1v1h-1zM241 483h1v1h-1zM242 483h1v1h-1zM243 483h1v1h-1zM244 483h1v1h-1zM274 483h1v1h-1zM275 483h1v1h-1zM280 483h1v1h-1zM281 483h1v1h-1zM282 483h1v1h-1zM288 483h1v1h-1zM289 483h1v1h-1zM290 483h1v1h-1zM291 483h1v1h-1zM323 483h1v1h-1zM324 483h1v1h-1zM325 483h1v1h-1zM326 483h1v1h-1zM327 483h1v1h-1zM328 483h1v1h-1zM329 483h1v1h-1zM334 483h1v1h-1zM335 483h1v1h-1zM336 483h1v1h-1zM368 483h1v1h-1zM369 483h1v1h-1zM374 483h1v1h-1zM375 483h1v1h-1zM376 483h1v1h-1zM382 483h1v1h-1zM383 483h1v1h-1zM384 483h1v1h-1zM385 483h1v1h-1zM415 483h1v1h-1zM416 483h1v1h-1zM421 483h1v1h-1zM422 483h1v1h-1zM423 483h1v1h-1zM429 483h1v1h-1zM430 483h1v1h-1zM431 483h1v1h-1zM432 483h1v1h-1z" fill="#f00"/>
<rect x="466" y="479" width="1" height="4" fill="#fff"/>
<rect x="505" y="479" width="1" height="4" fill="#fff"/>
<rect x="544" y="479" width="1" height="4" fill="#fff"/>
<rect x="583" y="473" width="1" height="10" fill="#fff"/>
<rect x="622" y="479" width="1" height="4" fill="#fff"/>
<rect x="661" y="479" width="1" height="4" fill="#fff"/>
<rect x="459" y="483" width="213" height="1" fill="#f00"/>
</g>
<g>
<text x="97.5" y="14" font-size="11.5" text-anchor="start" fill="#fff" textLength="33.5" lengthAdjust="spacingAndGlyphs">20:00</text>
<text x="97.5" y="502" font-size="11.5" text-anchor="start" fill="#fff" textLength="33.5" lengthAdjust="spacingAndGlyphs">20:00</text>
<text x="253.5" y="14" font-size="11.5" text-anchor="start" fill="#fff" textLength="33.5" lengthAdjust="spacingAndGlyphs">16:00</text>
<text x="253.5" y="502" font-size="11.5" text-anchor="start" fill="#fff" textLength="33.5" lengthAdjust="spacingAndGlyphs">16:00</text>
<text x="410.5" y="14" font-size="11.5" text-anchor="start" fill="#fff" textLength="33.5" lengthAdjust="spacingAndGlyphs">12:00</text>
<text x="410.5" y="502" font-size="11.5" text-anchor="start" fill="#fff" textLength="33.5" lengthAdjust="spacingAndGlyphs">12:00</text>
<text x="566.5" y="14" font-size="11.5" text-anchor="start" fill="#fff" textLength="33.5" lengthAdjust="spacingAndGlyphs">08:00</text>
<text x="566.5" y="502" font-size="11.5" text-anchor="start" fill="#fff" textLength="33.5" lengthAdjust="spacingAndGlyphs">08:00</text>
<text x="18" y="62" font-size="12.5" text-anchor="start" fill="#fff" textLength="77.5" lengthAdjust="spacingAndGlyphs">TM SUBMODE</text>
<text x="7.5" y="109" font-size="12.5" text-anchor="start" fill="#fff" textLength="94" lengthAdjust="spacingAndGlyphs">LASCO/EIT (OP)</text>
<text x="49" y="151" font-size="12.5" text-anchor="start" fill="#fff" textLength="52" lengthAdjust="spacingAndGlyphs">OS<tspan dy="-2">_</tspan><tspan dy="2">3092</tspan></text>
<text x="49" y="179" font-size="12.5" text-anchor="start" fill="#fff" textLength="52" lengthAdjust="spacingAndGlyphs">OS<tspan dy="-2">_</tspan><tspan dy="2">3341</tspan></text>
<text x="49" y="207" font-size="12.5" text-anchor="start" fill="#fff" textLength="52" lengthAdjust="spacingAndGlyphs">OS<tspan dy="-2">_</tspan><tspan dy="2">3342</tspan></text>
<text x="49" y="235" font-size="12.5" text-anchor="start" fill="#fff" textLength="52" lengthAdjust="spacingAndGlyphs">OS<tspan dy="-2">_</tspan><tspan dy="2">3360</tspan></text>
<text x="49" y="264" font-size="12.5" text-anchor="start" fill="#fff" textLength="52" lengthAdjust="spacingAndGlyphs">OS<tspan dy="-2">_</tspan><tspan dy="2">3361</tspan></text>
<text x="49" y="292" font-size="12.5" text-anchor="start" fill="#fff" textLength="52" lengthAdjust="spacingAndGlyphs">OS<tspan dy="-2">_</tspan><tspan dy="2">3387</tspan></text>
<text x="49" y="320" font-size="12.5" text-anchor="start" fill="#fff" textLength="52" lengthAdjust="spacingAndGlyphs">OS<tspan dy="-2">_</tspan><tspan dy="2">3389</tspan></text>
<text x="49" y="348" font-size="12.5" text-anchor="start" fill="#fff" textLength="52" lengthAdjust="spacingAndGlyphs">OS<tspan dy="-2">_</tspan><tspan dy="2">3390</tspan></text>
<text x="49" y="376" font-size="12.5" text-anchor="start" fill="#fff" textLength="52" lengthAdjust="spacingAndGlyphs">OS<tspan dy="-2">_</tspan><tspan dy="2">3405</tspan></text>
<text x="49" y="404" font-size="12.5" text-anchor="start" fill="#fff" textLength="52" lengthAdjust="spacingAndGlyphs">OS<tspan dy="-2">_</tspan><tspan dy="2">3422</tspan></text>
<text x="7.5" y="453" font-size="12.5" text-anchor="start" fill="#fff" textLength="82.5" lengthAdjust="spacingAndGlyphs">LASCO-buffer</text>
<text x="101.3" y="38" font-size="12.5" text-anchor="start" fill="#fff" textLength="5.4" lengthAdjust="spacingAndGlyphs">5</text>
<text x="101.3" y="48" font-size="12.5" text-anchor="start" fill="#fff" textLength="5.4" lengthAdjust="spacingAndGlyphs">4</text>
<text x="101.3" y="58" font-size="12.5" text-anchor="start" fill="#fff" textLength="5.4" lengthAdjust="spacingAndGlyphs">3</text>
<text x="101.3" y="67" font-size="12.5" text-anchor="start" fill="#fff" textLength="5.4" lengthAdjust="spacingAndGlyphs">2</text>
<text x="101.3" y="76" font-size="12.5" text-anchor="start" fill="#fff" textLength="5.4" lengthAdjust="spacingAndGlyphs">1</text>
<text x="87" y="432" font-size="12.5" text-anchor="start" fill="#fff" textLength="20" lengthAdjust="spacingAndGlyphs">100</text>
<text x="93" y="444" font-size="12.5" text-anchor="start" fill="#fff" textLength="14" lengthAdjust="spacingAndGlyphs">80</text>
<text x="93" y="477" font-size="12.5" text-anchor="start" fill="#fff" textLength="14" lengthAdjust="spacingAndGlyphs">20</text>
<text x="101" y="488.5" font-size="12.5" text-anchor="start" fill="#fff" textLength="6" lengthAdjust="spacingAndGlyphs">0</text>
<text y="518" font-size="12.5" fill="#fff"><tspan x="308.5" textLength="75.5" lengthAdjust="spacingAndGlyphs">1999/05/26</tspan> <tspan x="392" textLength="79" lengthAdjust="spacingAndGlyphs">19:12:00.000</tspan></text>
<text x="13.5" y="520.2" font-size="10.5" fill="#f00" style="stroke:none" textLength="12" lengthAdjust="spacingAndGlyphs">C1</text>
<text x="34.5" y="520.2" font-size="10.5" fill="#0f0" style="stroke:none" textLength="13" lengthAdjust="spacingAndGlyphs">C2</text>
<text x="55.5" y="520.2" font-size="10.5" fill="#98f4fc" style="stroke:none" textLength="13" lengthAdjust="spacingAndGlyphs">C3</text>
<text x="76.3" y="520.2" font-size="10.5" fill="#ff0" style="stroke:none" textLength="14.6" lengthAdjust="spacingAndGlyphs">EIT</text>
</g>
</svg>
</body></html>
